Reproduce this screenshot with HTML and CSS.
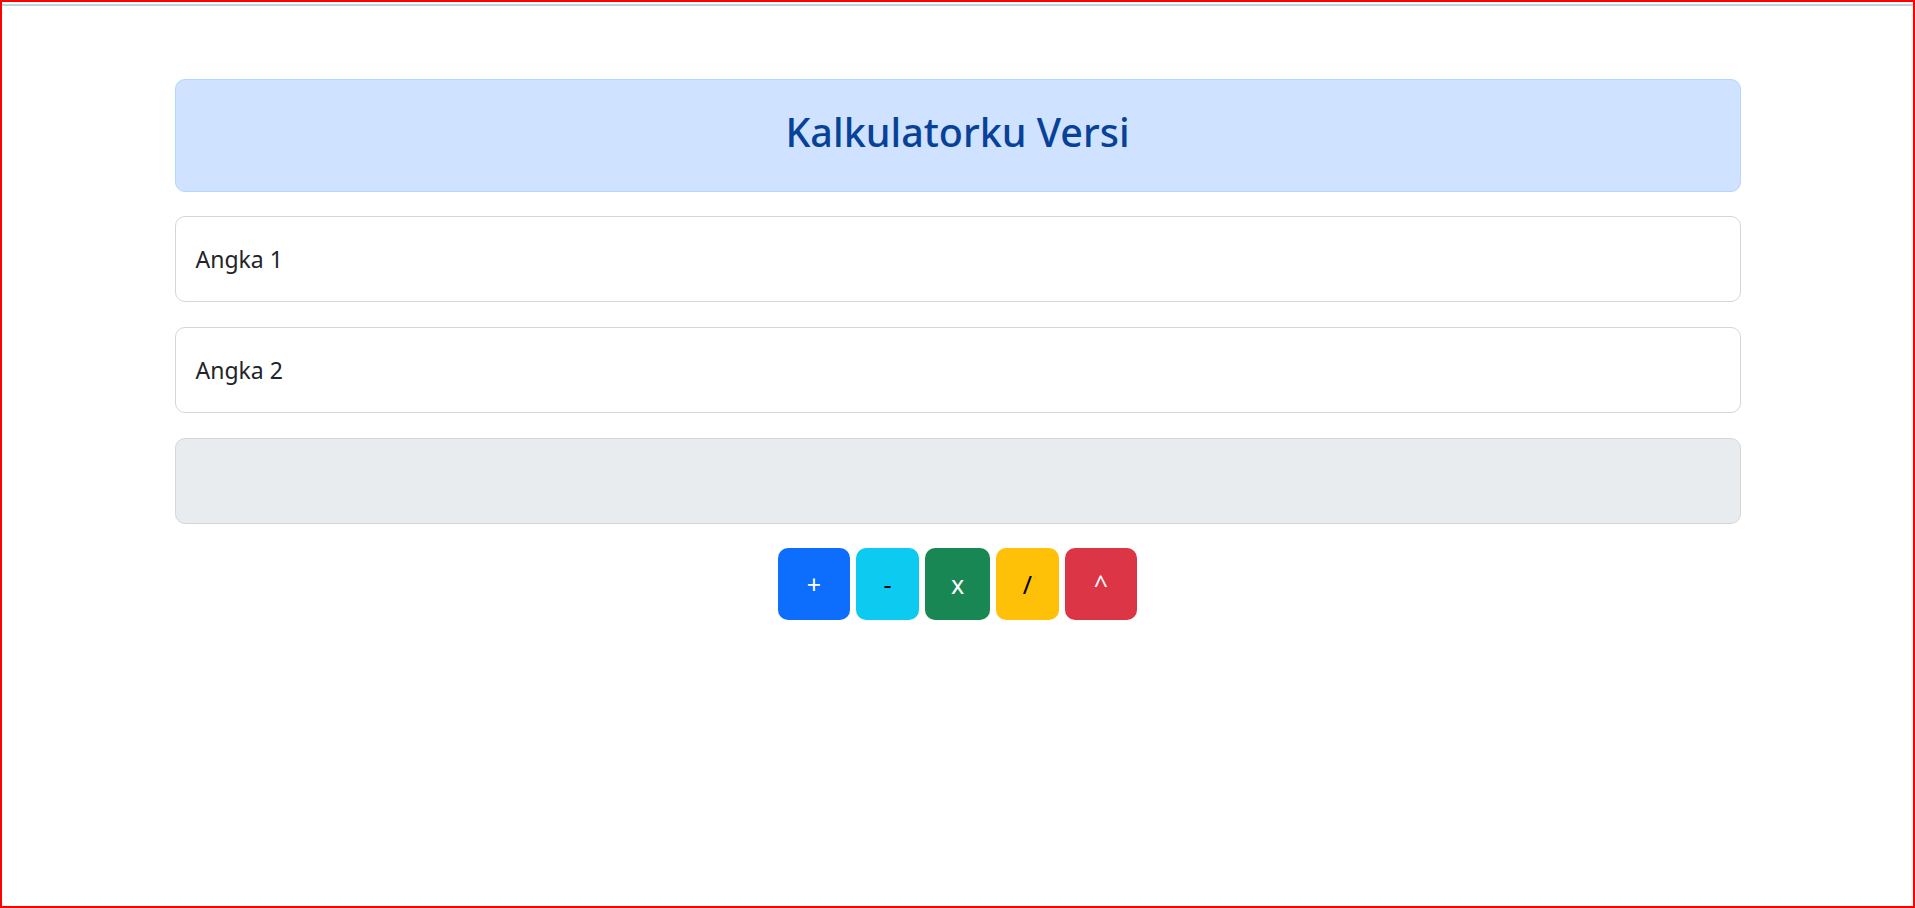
FILE: index.html
```html
<!DOCTYPE html>
<html lang="id">
<head>
<meta charset="utf-8">
<title>Kalkulatorku</title>
<link rel="stylesheet" href="styles.css">
</head>
<body>
<div class="frame">
  <div class="topline"></div>
  <main class="calc">
    <div class="calc-header">
      <h1 class="calc-title">Kalkulatorku Versi</h1>
    </div>
    <div class="field">
      <span class="field-placeholder">Angka 1</span>
    </div>
    <div class="field">
      <span class="field-placeholder">Angka 2</span>
    </div>
    <div class="field field-result"></div>
    <div class="ops">
      <button class="op op-add" type="button">+</button>
      <button class="op op-sub" type="button">-</button>
      <button class="op op-mul" type="button">x</button>
      <button class="op op-div" type="button">/</button>
      <button class="op op-pow" type="button">^</button>
    </div>
  </main>
</div>
</body>
</html>
```

FILE: styles.css
```css
html, body {
  margin: 0;
  padding: 0;
  background: #ffffff;
}

body {
  font-family: "Noto Sans", "Open Sans", "Liberation Sans", sans-serif;
  color: #212529;
}

.frame {
  box-sizing: border-box;
  height: 908px;
  border: 2px solid #ff0000;
  overflow: hidden;
}

.topline {
  margin-top: 2px;
  height: 2px;
  background: #c3d2d6;
}

.calc {
  width: 1566px;
  margin: 73px auto 0;
  display: flex;
  flex-direction: column;
}

.calc-header {
  box-sizing: border-box;
  height: 113px;
  background: #cfe2ff;
  border: 1px solid #b6d4fe;
  border-radius: 10px;
  display: flex;
  align-items: center;
  justify-content: center;
  padding-bottom: 6px;
}

.calc-title {
  margin: 0;
  font-size: 39.5px;
  font-weight: 500;
  color: #084298;
  line-height: 1.2;
}

.field {
  box-sizing: border-box;
  height: 86px;
  margin-top: 25px;
  border: 1px solid #d3d7db;
  border-radius: 10px;
  background: #ffffff;
  display: flex;
  align-items: center;
  padding: 0 20px;
}

.calc-header + .field {
  margin-top: 24px;
}

.field-placeholder {
  font-size: 23px;
  color: #212529;
}

.field-result {
  background: #e9ecef;
  border-color: #d3d7db;
}

.ops {
  margin-top: 24px;
  display: flex;
  justify-content: center;
  gap: 6px;
}

.op {
  box-sizing: border-box;
  height: 72px;
  border: none;
  border-radius: 10px;
  font-family: "Noto Sans", "Open Sans", "Liberation Sans", sans-serif;
  font-size: 25px;
  padding: 0;
  cursor: pointer;
  color: #ffffff;
}

.op-add { width: 72px; background: #0d6efd; }
.op-sub { width: 63px; background: #0dcaf0; color: #000000; }
.op-mul { width: 65px; background: #198754; }
.op-div { width: 63px; background: #ffc107; color: #000000; }
.op-pow { width: 72px; background: #dc3545; }
```
